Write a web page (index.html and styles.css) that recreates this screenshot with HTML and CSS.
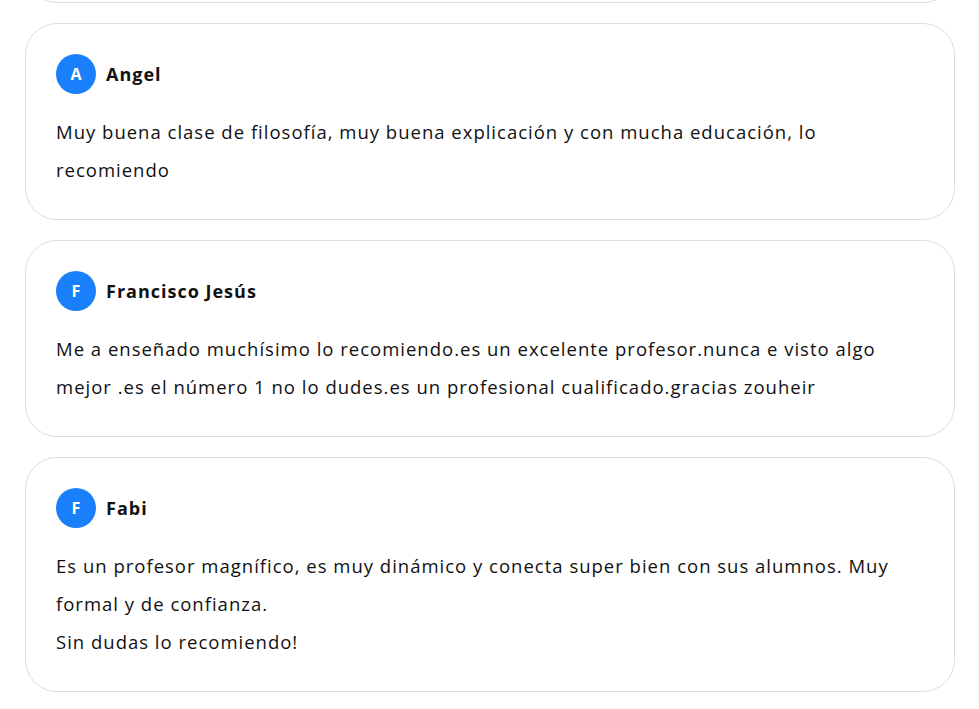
FILE: index.html
```html
<!DOCTYPE html>
<html lang="es">
<head>
<meta charset="utf-8">
<link rel="stylesheet" href="styles.css">
</head>
<body>
<div class="list">
  <div class="card card-prev"></div>
  <div class="card">
    <div class="head"><span class="avatar">A</span><span class="name">Angel</span></div>
    <p class="text">Muy buena clase de filosofía, muy buena explicación y con mucha educación, lo recomiendo</p>
  </div>
  <div class="card">
    <div class="head"><span class="avatar">F</span><span class="name">Francisco Jesús</span></div>
    <p class="text">Me a enseñado muchísimo lo recomiendo.es un excelente profesor.nunca e visto algo mejor .es el número 1 no lo dudes.es un profesional cualificado.gracias zouheir</p>
  </div>
  <div class="card">
    <div class="head"><span class="avatar">F</span><span class="name">Fabi</span></div>
    <p class="text">Es un profesor magnífico, es muy dinámico y conecta super bien con sus alumnos. Muy formal y de confianza.<br><span class="last">Sin dudas lo recomiendo!</span></p>
  </div>
</div>
</body>
</html>
```
FILE: styles.css
```css
html, body { margin: 0; padding: 0; background: #fff; }
body {
  font-family: "Open Sans", "Lato", sans-serif;
  color: #111;
  width: 979px;
  height: 709px;
  overflow: hidden;
}
.list {
  display: flex;
  flex-direction: column;
  gap: 20px;
  padding: 0 24px 0 25px;
  margin-top: -61px;
}
.card {
  border: 1px solid #dcdcdc;
  border-radius: 32px;
  padding: 30px;
  background: #fff;
}
.card-prev { height: 2px; }
.head {
  display: flex;
  align-items: center;
  gap: 10px;
  height: 40px;
}
.avatar {
  width: 40px;
  height: 40px;
  border-radius: 50%;
  background: #1a7ffb;
  color: #fff;
  font-weight: 700;
  font-size: 16px;
  display: flex;
  align-items: center;
  justify-content: center;
}
.name {
  font-weight: 700;
  font-size: 18px;
  letter-spacing: 1px;
  color: #111;
}
.text {
  margin: 19px 0 0;
  font-size: 18.5px;
  letter-spacing: 1px;
  line-height: 38px;
  color: #111;
}
.last { display: inline-block; line-height: 34px; }
```
